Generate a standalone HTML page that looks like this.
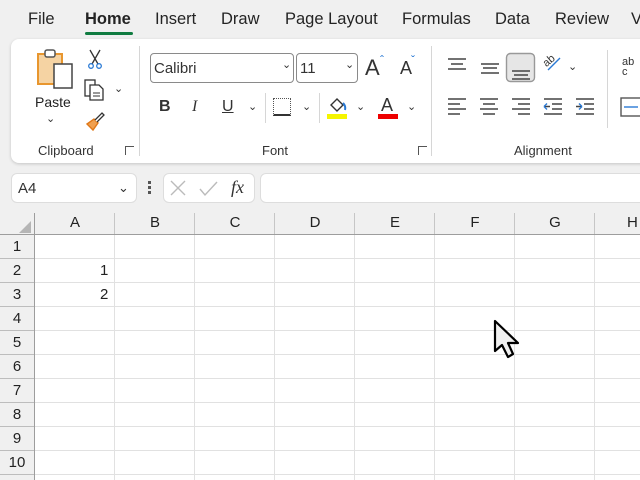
<!DOCTYPE html>
<html><head><style>
*{margin:0;padding:0;box-sizing:border-box}
body{width:640px;height:480px;overflow:hidden;background:#f0f0f0;font-family:"Liberation Sans",sans-serif;position:relative;color:#222}
.a{position:absolute}
.tab{position:absolute;top:10px;font-size:16.5px;color:#242424}
.card{position:absolute;left:11px;top:39px;width:640px;height:124px;background:#fff;border-radius:8px;box-shadow:0 1px 3px rgba(0,0,0,.18)}
.sep{position:absolute;width:1px;background:#d6d6d6}
.lbl{position:absolute;font-size:13px;color:#333;top:143px}
.box{position:absolute;border:1px solid #8a8a8a;border-radius:4px;background:#fff}
.chev{position:absolute;font-size:11px;color:#333}
.ch{position:absolute;top:211px;height:24px;font-size:15px;text-align:center;line-height:24px;color:#222}
.rh{position:absolute;left:0;width:34px;height:24px;text-align:center;line-height:24px;font-size:15px;color:#222}
</style></head><body>
<div class="tab" style="left:28px">File</div>
<div class="tab" style="left:85px;font-weight:bold">Home</div>
<div class="a" style="left:85px;top:32px;width:48px;height:3px;background:#107c41;border-radius:2px"></div>
<div class="tab" style="left:155px">Insert</div>
<div class="tab" style="left:221px">Draw</div>
<div class="tab" style="left:285px">Page Layout</div>
<div class="tab" style="left:402px">Formulas</div>
<div class="tab" style="left:495px">Data</div>
<div class="tab" style="left:555px">Review</div>
<div class="tab" style="left:631px">V</div>

<div class="card"></div>
<!-- clipboard -->
<svg class="a" style="left:36px;top:48px" width="40" height="42" viewBox="0 0 40 42">
<rect x="2" y="6" width="24" height="30" fill="#f5d3a3" stroke="#e8962e" stroke-width="2"/>
<rect x="9" y="2" width="10" height="7" rx="2" fill="#fff" stroke="#555" stroke-width="1.5"/>
<rect x="18" y="16" width="18" height="24" fill="#fff" stroke="#444" stroke-width="1.5"/>
</svg>
<div class="a" style="left:35px;top:94px;font-size:14px">Paste</div>
<div class="chev" style="left:46px;top:112px">⌄</div>
<svg class="a" style="left:86px;top:48px" width="18" height="22"><path d="M4 2 L12 16 M14 2 L6 16" stroke="#333" stroke-width="1.3"/><circle cx="5" cy="18" r="2.3" fill="none" stroke="#2a7ad5" stroke-width="1.3"/><circle cx="13" cy="18" r="2.3" fill="none" stroke="#2a7ad5" stroke-width="1.3"/></svg>
<svg class="a" style="left:84px;top:79px" width="22" height="22"><rect x="1" y="1" width="10" height="16" fill="#fff" stroke="#333" stroke-width="1.3"/><path d="M6 6 h9 l4 4 v11 h-13z" fill="#fff" stroke="#333" stroke-width="1.3"/><path d="M9 14h7M9 17h7" stroke="#333"/></svg>
<div class="chev" style="left:114px;top:82px">⌄</div>
<svg class="a" style="left:84px;top:110px" width="22" height="22"><path d="M3 14 l6 6 l5-7 l-4-4z" fill="#f0a050" stroke="#e07818" stroke-width="1.4"/><path d="M11 10 l7-7 l2 2 l-7 7" fill="#fff" stroke="#333" stroke-width="1.3"/></svg>
<div class="lbl" style="left:38px">Clipboard</div>
<div class="a" style="left:125px;top:146px;width:9px;height:9px;border-left:1px solid #555;border-top:1px solid #555;font-size:0"></div>
<div class="sep" style="left:139px;top:46px;height:110px"></div>
<!-- font -->
<div class="box" style="left:150px;top:53px;width:144px;height:30px"></div>
<div class="a" style="left:154px;top:60px;font-size:15px;color:#333">Calibri</div>
<div class="chev" style="left:282px;top:58px">⌄</div>
<div class="box" style="left:296px;top:53px;width:62px;height:30px"></div>
<div class="a" style="left:300px;top:60px;font-size:15px;color:#333">11</div>
<div class="chev" style="left:345px;top:58px">⌄</div>
<div class="a" style="left:365px;top:55px;font-size:22px;color:#333">A</div><div class="a" style="left:380px;top:53px;font-size:12px;color:#2a7ad5">ˆ</div>
<div class="a" style="left:400px;top:58px;font-size:18px;color:#333">A</div><div class="a" style="left:411px;top:53px;font-size:12px;color:#2a7ad5">ˇ</div>
<div class="a" style="left:159px;top:98px;font-size:16px;font-weight:bold;color:#333">B</div>
<div class="a" style="left:192px;top:98px;font-size:16px;font-style:italic;font-family:'Liberation Serif';color:#333">I</div>
<div class="a" style="left:222px;top:98px;font-size:16px;text-decoration:underline;color:#333">U</div>
<div class="chev" style="left:248px;top:100px">⌄</div>
<div class="sep" style="left:265px;top:93px;height:30px"></div>
<div class="a" style="left:273px;top:98px;width:18px;height:18px;border:1px dotted #555;border-bottom:2px solid #333"></div>
<div class="chev" style="left:302px;top:100px">⌄</div>
<div class="sep" style="left:319px;top:93px;height:30px"></div>
<svg class="a" style="left:328px;top:97px" width="20" height="16"><path d="M3 8 l6-6 l6 6 l-6 6z" fill="#fff" stroke="#333" stroke-width="1.4"/><path d="M15 6 q3 3 2 7" stroke="#2a7ad5" stroke-width="2" fill="none"/></svg>
<div class="a" style="left:327px;top:114px;width:20px;height:5px;background:#f5f500"></div>
<div class="chev" style="left:356px;top:100px">⌄</div>
<div class="a" style="left:381px;top:95px;font-size:18px;color:#333">A</div>
<div class="a" style="left:378px;top:114px;width:20px;height:5px;background:#e00"></div>
<div class="chev" style="left:407px;top:100px">⌄</div>
<div class="lbl" style="left:262px">Font</div>
<div class="a" style="left:418px;top:146px;width:9px;height:9px;border-left:1px solid #555;border-top:1px solid #555"></div>
<div class="sep" style="left:431px;top:46px;height:110px"></div>
<!-- alignment -->
<svg class="a" style="left:440px;top:52px" width="200" height="70" stroke="#444" stroke-width="1.4">
<path d="M8 7h18M11 12h12M8 17h18"/>
<path d="M41 12h18M43 16h14M41 21h18"/>
<rect x="66.5" y="1.5" width="28" height="28" rx="4" fill="#e6e6e6" stroke="#999"/>
<path d="M72 19h18M74 23h14M72 27h18"/>
<path d="M108 18l12-12" stroke="#2a7ad5"/>
<path d="M8 47h18M8 52h12M8 57h18M8 62h12"/>
<path d="M40 47h18M43 52h12M40 57h18M43 62h12"/>
<path d="M72 47h18M78 52h12M72 57h18M78 62h12"/>
<path d="M104 47h18M112 52h10M112 57h10M104 62h18M104 54.5h6" /><path d="M104 54.5l3-3M104 54.5l3 3" stroke="#2a7ad5"/>
<path d="M136 47h18M144 52h10M144 57h10M136 62h18M136 54.5h6" /><path d="M142 54.5l-3-3M142 54.5l-3 3" stroke="#2a7ad5"/>
<rect x="181" y="46" width="20" height="18" fill="none" stroke="#555"/><path d="M184 55h14" stroke="#2a7ad5"/>
</svg>
<div class="a" style="left:543px;top:55px;font-size:11px;color:#333;transform:rotate(-40deg)">ab</div>
<div class="chev" style="left:568px;top:60px">⌄</div>
<div class="lbl" style="left:514px">Alignment</div>
<div class="sep" style="left:607px;top:50px;height:78px"></div>
<div class="a" style="left:622px;top:57px;font-size:11px;color:#333;line-height:10px">ab<br>c</div>

<!-- formula bar -->
<div class="a" style="left:11px;top:173px;width:126px;height:30px;background:#fff;border:1px solid #ddd;border-radius:6px"></div>
<div class="a" style="left:18px;top:180px;font-size:15px;color:#333">A4</div>
<div class="chev" style="left:118px;top:180px;font-size:13px">⌄</div>
<div class="a" style="left:148px;top:181px;width:3px;height:3px;background:#555;box-shadow:0 5px 0 #555,0 10px 0 #555"></div>
<div class="a" style="left:163px;top:173px;width:92px;height:30px;background:#fff;border:1px solid #ddd;border-radius:6px"></div>
<svg class="a" style="left:168px;top:178px" width="60" height="20" stroke="#bbb" stroke-width="1.4" fill="none"><path d="M3 3l14 14M17 3l-14 14M32 11l5 6l12-13"/></svg>
<div class="a" style="left:231px;top:177px;font-size:18px;font-style:italic;font-family:'Liberation Serif';color:#333">fx</div>
<div class="a" style="left:260px;top:173px;width:400px;height:30px;background:#fff;border:1px solid #ddd;border-radius:6px"></div>

<!-- grid -->
<div class="a" style="left:0;top:235px;width:640px;height:245px;background:#fff"></div>
<div class="a" style="left:0;top:235px;width:34px;height:245px;background:#f0f0f0"></div>
<svg class="a" style="left:0;top:211px" width="640" height="269">
<polygon points="31,10 31,22 19,22" fill="#b5b5b5"/>
<g stroke="#9d9d9d" stroke-width="1"><line x1="34.5" y1="2" x2="34.5" y2="269"/><line x1="0" y1="23.5" x2="640" y2="23.5"/></g>
<g stroke="#c6c6c6"><line x1="114.5" y1="2" x2="114.5" y2="23"/><line x1="194.5" y1="2" x2="194.5" y2="23"/><line x1="274.5" y1="2" x2="274.5" y2="23"/><line x1="354.5" y1="2" x2="354.5" y2="23"/><line x1="434.5" y1="2" x2="434.5" y2="23"/><line x1="514.5" y1="2" x2="514.5" y2="23"/><line x1="594.5" y1="2" x2="594.5" y2="23"/></g>
<g stroke="#e1e1e1"><line x1="114.5" y1="24" x2="114.5" y2="269"/><line x1="194.5" y1="24" x2="194.5" y2="269"/><line x1="274.5" y1="24" x2="274.5" y2="269"/><line x1="354.5" y1="24" x2="354.5" y2="269"/><line x1="434.5" y1="24" x2="434.5" y2="269"/><line x1="514.5" y1="24" x2="514.5" y2="269"/><line x1="594.5" y1="24" x2="594.5" y2="269"/>
<line x1="35" y1="47.5" x2="640" y2="47.5"/><line x1="35" y1="71.5" x2="640" y2="71.5"/><line x1="35" y1="95.5" x2="640" y2="95.5"/><line x1="35" y1="119.5" x2="640" y2="119.5"/><line x1="35" y1="143.5" x2="640" y2="143.5"/><line x1="35" y1="167.5" x2="640" y2="167.5"/><line x1="35" y1="191.5" x2="640" y2="191.5"/><line x1="35" y1="215.5" x2="640" y2="215.5"/><line x1="35" y1="239.5" x2="640" y2="239.5"/><line x1="35" y1="263.5" x2="640" y2="263.5"/></g>
<g stroke="#bdbdbd"><line x1="0" y1="47.5" x2="34" y2="47.5"/><line x1="0" y1="71.5" x2="34" y2="71.5"/><line x1="0" y1="95.5" x2="34" y2="95.5"/><line x1="0" y1="119.5" x2="34" y2="119.5"/><line x1="0" y1="143.5" x2="34" y2="143.5"/><line x1="0" y1="167.5" x2="34" y2="167.5"/><line x1="0" y1="191.5" x2="34" y2="191.5"/><line x1="0" y1="215.5" x2="34" y2="215.5"/><line x1="0" y1="239.5" x2="34" y2="239.5"/><line x1="0" y1="263.5" x2="34" y2="263.5"/></g>
</svg>
<div class="ch" style="left:35px;width:80px">A</div>
<div class="ch" style="left:115px;width:80px">B</div>
<div class="ch" style="left:195px;width:80px">C</div>
<div class="ch" style="left:275px;width:80px">D</div>
<div class="ch" style="left:355px;width:80px">E</div>
<div class="ch" style="left:435px;width:80px">F</div>
<div class="ch" style="left:515px;width:80px">G</div>
<div class="ch" style="left:595px;width:80px;text-align:left;padding-left:32px">H</div>
<div class="rh" style="top:235px">1</div><div class="rh" style="top:259px">2</div><div class="rh" style="top:283px">3</div><div class="rh" style="top:307px">4</div><div class="rh" style="top:331px">5</div><div class="rh" style="top:355px">6</div><div class="rh" style="top:379px">7</div><div class="rh" style="top:403px">8</div><div class="rh" style="top:427px">9</div><div class="rh" style="top:451px">10</div>
<div class="a" style="left:100px;top:262px;font-size:15px">1</div>
<div class="a" style="left:100px;top:286px;font-size:15px">2</div>
<svg class="a" style="left:492px;top:318px" width="32" height="44"><path d="M3 3 L3 33 L10 27 L16 39 L21 36 L16 25 L26 25 Z" fill="#f0f0f0" stroke="#000" stroke-width="2.2" stroke-linejoin="round"/></svg>
</body></html>
